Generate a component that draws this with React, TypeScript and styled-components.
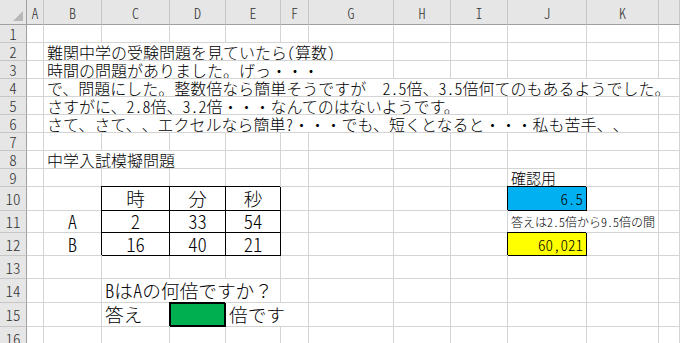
import * as React from "react";
import styled, { createGlobalStyle } from "styled-components";

// column widths: row header, A..K, and the cut-off L
const COLS = "27px 17px 58px 68px 56px 55px 28px 85px 57px 57px 79px 72px 1fr";
const LETTERS = ["A", "B", "C", "D", "E", "F", "G", "H", "I", "J", "K", ""];
const GRID = "#d4d4d4";

const GlobalStyle = createGlobalStyle`
  html, body {
    margin: 0;
    padding: 0;
    background: #ffffff;
    overflow: hidden;
  }
`;

const Sheet = styled.div`
  width: 680px;
  height: 343px;
  overflow: hidden;
  font-family: "Noto Sans CJK JP", "Noto Sans", sans-serif;
  font-weight: 300;
  font-feature-settings: "hwid" 1;
  color: #000;
`;

const Row = styled.div<{ $h: number }>`
  display: grid;
  grid-template-columns: ${COLS};
  height: ${(p) => p.$h}px;
`;

const ColHead = styled.div`
  background: #e6e6e6;
  border-right: 1px solid #c6c6c6;
  border-bottom: 1px solid #a0a0a0;
  display: flex;
  align-items: center;
  justify-content: center;
  font-size: 14px;
  color: #333;
  padding-top: 2px;
`;

const Corner = styled(ColHead)`
  position: relative;
  border-right-color: #a0a0a0;

  &::after {
    content: "";
    position: absolute;
    right: 3px;
    bottom: 3px;
    width: 0;
    height: 0;
    border-left: 10px solid transparent;
    border-bottom: 10px solid #b8b8b8;
  }
`;

const RowHead = styled.div`
  background: #e6e6e6;
  border-right: 1px solid #a0a0a0;
  border-bottom: 1px solid #c6c6c6;
  display: flex;
  align-items: center;
  justify-content: center;
  font-size: 15px;
  line-height: 1;
  color: #333;
`;

type Align = "left" | "center" | "right";

const Cell = styled.div<{
  $span?: number;
  $align?: Align;
  $size?: number;
  $fill?: string;
  $box?: boolean;
  $thick?: boolean;
  $full?: boolean;
}>`
  grid-column: span ${(p) => p.$span ?? 1};
  min-width: 0;
  display: flex;
  align-items: center;
  justify-content: ${(p) =>
    p.$align === "center" ? "center" : p.$align === "right" ? "flex-end" : "flex-start"};
  padding: 0 3px;
  white-space: pre;
  overflow: hidden;
  font-size: ${(p) => p.$size ?? 15}px;
  font-feature-settings: ${(p) => (p.$full ? "normal" : `"hwid" 1`)};
  line-height: 1;
  background: ${(p) => p.$fill ?? "transparent"};
  border-right: 1px solid ${(p) => (p.$box ? "#000" : GRID)};
  border-bottom: 1px solid ${(p) => (p.$box ? "#000" : GRID)};
  box-shadow: ${(p) =>
    p.$box
      ? p.$thick
        ? "-1px -1px 0 0 #000, inset 0 0 0 1px #000"
        : "-1px -1px 0 0 #000"
      : "none"};
`;

// half-width run inside a full-width cell
const Han = styled.span`
  font-feature-settings: "hwid" 1;
`;

const blanks = (n: number, key: string) =>
  Array.from({ length: n }, (_, i) => <Cell key={`${key}-${i}`} />);

const Big = 18.67;
const Text = 16;

export default function App() {
  return (
    <Sheet>
      <GlobalStyle />
      <Row $h={25}>
        <Corner />
        {LETTERS.map((l, i) => (
          <ColHead key={i}>{l}</ColHead>
        ))}
      </Row>

      <Row $h={18}>
        <RowHead>1</RowHead>
        {blanks(12, "r1")}
      </Row>
      <Row $h={18}>
        <RowHead>2</RowHead>
        <Cell />
        <Cell $span={6} $size={Text}>難関中学の受験問題を見ていたら(算数)</Cell>
        {blanks(5, "r2")}
      </Row>
      <Row $h={18}>
        <RowHead>3</RowHead>
        <Cell />
        <Cell $span={6} $size={Text}>時間の問題がありました。げっ・・・</Cell>
        {blanks(5, "r3")}
      </Row>
      <Row $h={18}>
        <RowHead>4</RowHead>
        <Cell />
        <Cell $span={11} $size={Text} $full>
          で、問題にした。整数倍なら簡単そうですが　<Han>2.5</Han>倍、<Han>3.5</Han>
          倍何てのもあるようでした。
        </Cell>
      </Row>
      <Row $h={18}>
        <RowHead>5</RowHead>
        <Cell />
        <Cell $span={8} $size={Text}>さすがに、2.8倍、3.2倍・・・なんてのはないようです。</Cell>
        {blanks(3, "r5")}
      </Row>
      <Row $h={18}>
        <RowHead>6</RowHead>
        <Cell />
        <Cell $span={10} $size={Text}>
          さて、さて、、エクセルなら簡単?・・・でも、短くとなると・・・私も苦手、、
        </Cell>
        {blanks(1, "r6")}
      </Row>
      <Row $h={18}>
        <RowHead>7</RowHead>
        {blanks(12, "r7")}
      </Row>
      <Row $h={18}>
        <RowHead>8</RowHead>
        <Cell />
        <Cell $span={3} $size={Text}>中学入試模擬問題</Cell>
        {blanks(8, "r8")}
      </Row>
      <Row $h={18}>
        <RowHead>9</RowHead>
        {blanks(9, "r9")}
        <Cell>確認用</Cell>
        {blanks(2, "r9b")}
      </Row>

      <Row $h={24}>
        <RowHead>10</RowHead>
        {blanks(2, "r10")}
        <Cell $box $align="center" $size={Big}>時</Cell>
        <Cell $box $align="center" $size={Big}>分</Cell>
        <Cell $box $align="center" $size={Big}>秒</Cell>
        {blanks(4, "r10b")}
        <Cell $box $fill="#00b0f0" $align="right">6.5</Cell>
        {blanks(2, "r10c")}
      </Row>
      <Row $h={22}>
        <RowHead>11</RowHead>
        <Cell />
        <Cell $align="center" $size={Big}>A</Cell>
        <Cell $box $align="center" $size={Big}>2</Cell>
        <Cell $box $align="center" $size={Big}>33</Cell>
        <Cell $box $align="center" $size={Big}>54</Cell>
        {blanks(4, "r11")}
        <Cell $span={2} $size={12}>答えは2.5倍から9.5倍の間</Cell>
        <Cell />
      </Row>
      <Row $h={23}>
        <RowHead>12</RowHead>
        <Cell />
        <Cell $align="center" $size={Big}>B</Cell>
        <Cell $box $align="center" $size={Big}>16</Cell>
        <Cell $box $align="center" $size={Big}>40</Cell>
        <Cell $box $align="center" $size={Big}>21</Cell>
        {blanks(4, "r12")}
        <Cell $box $fill="#ffff00" $align="right">60,021</Cell>
        {blanks(2, "r12b")}
      </Row>
      <Row $h={23}>
        <RowHead>13</RowHead>
        {blanks(12, "r13")}
      </Row>
      <Row $h={24}>
        <RowHead>14</RowHead>
        {blanks(2, "r14")}
        <Cell $span={3} $size={Big} $full>
          <Han>B</Han>は<Han>A</Han>の何倍ですか？
        </Cell>
        {blanks(7, "r14b")}
      </Row>
      <Row $h={24}>
        <RowHead>15</RowHead>
        {blanks(2, "r15")}
        <Cell $size={Big}>答え</Cell>
        <Cell $box $thick $fill="#00b050" />
        <Cell $span={2} $size={Big}>倍です</Cell>
        {blanks(6, "r15b")}
      </Row>
      <Row $h={24}>
        <RowHead>16</RowHead>
        {blanks(12, "r16")}
      </Row>
    </Sheet>
  );
}
